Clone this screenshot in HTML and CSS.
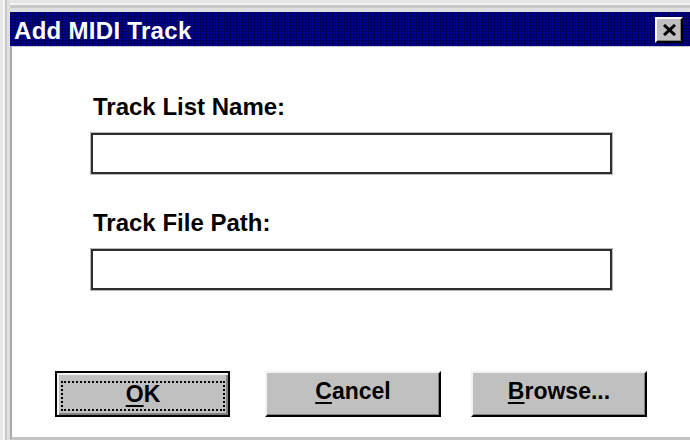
FILE: index.html
```html
<!DOCTYPE html>
<html lang="en">
<head>
<meta charset="utf-8">
<title>Add MIDI Track</title>
<link rel="stylesheet" href="styles.css">
</head>
<body>
<div class="window">
  <div class="titlebar">
    <span class="title">Add MIDI Track</span>
    <button class="close" type="button" aria-label="Close">
      <svg width="15" height="12" viewBox="0 0 15 12" aria-hidden="true">
        <path d="M2 1 L13 11 M13 1 L2 11" stroke="#000" stroke-width="3" fill="none"/>
      </svg>
    </button>
  </div>
  <div class="client">
    <form class="fields">
      <label class="field-label" for="list-name">Track List Name:</label>
      <input class="textbox" id="list-name" type="text">
      <label class="field-label second" for="file-path">Track File Path:</label>
      <input class="textbox" id="file-path" type="text">
    </form>
    <div class="buttons">
      <button class="btn default" type="button"><span class="focus"><u>O</u>K</span></button>
      <button class="btn cancel" type="button"><u>C</u>ancel</button>
      <button class="btn browse" type="button"><u>B</u>rowse...</button>
    </div>
  </div>
</div>
</body>
</html>
```

FILE: styles.css
```css
html, body {
  margin: 0;
  padding: 0;
}

body {
  width: 690px;
  height: 440px;
  overflow: hidden;
  background: #dcdcdc;
  font-family: "Liberation Sans", Arial, sans-serif;
}

/* outer sizing frame */
.window {
  box-sizing: border-box;
  height: 440px;
  padding: 12px 0 0 10px;
  display: flex;
  flex-direction: column;
  background:
    linear-gradient(to right, #e6e6e6 0 3px, #f4f4f4 3px 5px, #c8c8c8 5px 7px, #e0e0e0 7px 10px) left top / 10px 100% no-repeat,
    linear-gradient(to bottom, #e6e6e6 0 3px, #f4f4f4 3px 5px, #c8c8c8 5px 8px, #e0e0e0 8px 12px) left top / 100% 12px no-repeat,
    #e0e0e0;
}

/* caption bar with dithered navy fill */
.titlebar {
  height: 34px;
  display: flex;
  align-items: flex-start;
  justify-content: space-between;
  background:
    radial-gradient(circle, #000040 0.9px, transparent 1.2px) 0 0 / 3px 3px,
    #000096;
}

.title {
  padding: 6px 0 0 4px;
  color: #fff;
  font-weight: bold;
  font-size: 24px;
  line-height: 25px;
  letter-spacing: 0.3px;
}

.close {
  box-sizing: border-box;
  width: 28px;
  height: 26px;
  margin: 5px 7px 0 0;
  padding: 0;
  display: flex;
  align-items: center;
  justify-content: center;
  background: #c0c0c0;
  border-style: solid;
  border-width: 2px;
  border-color: #ffffff #000000 #000000 #ffffff;
  box-shadow: inset -1px -1px #808080;
}

.close svg {
  display: block;
}

/* dialog body */
.client {
  flex: 1;
  display: flex;
  flex-direction: column;
  background: #fff;
  border-left: 2px solid #a8a8a8;
  border-top: 1px solid #c8c8c8;
  border-bottom: 3px solid #c4c4c4;
}

.fields {
  margin: 0;
  padding: 47px 0 0 79px;
  display: flex;
  flex-direction: column;
  align-items: flex-start;
}

.field-label {
  padding-left: 2px;
  color: #000;
  font-weight: bold;
  font-size: 24px;
  line-height: 25px;
}

.field-label.second {
  margin-top: 36px;
}

.textbox {
  box-sizing: border-box;
  width: 521px;
  height: 41px;
  margin: 14px 0 0 0;
  padding: 0 6px;
  border: 2px solid #2e2e2e;
  box-shadow: 0 0 0 1px #b8b8b8;
  background: #fff;
  font: 20px "Liberation Sans", Arial, sans-serif;
  outline: none;
}

/* push buttons */
.buttons {
  display: flex;
  padding: 81px 0 0 43px;
}

.btn {
  box-sizing: border-box;
  width: 176px;
  height: 46px;
  padding: 0 0 5px 0;
  display: flex;
  align-items: center;
  justify-content: center;
  background: #c0c0c0;
  color: #000;
  border-style: solid;
  border-width: 2px;
  border-color: #f2f2f2 #000000 #000000 #f2f2f2;
  box-shadow: inset -1px -1px #808080;
  font-family: "Liberation Sans", Arial, sans-serif;
  font-weight: bold;
  font-size: 23px;
  line-height: 25px;
}

.btn u {
  text-decoration-thickness: 2px;
  text-underline-offset: 3px;
}

.btn.default {
  width: 175px;
  padding: 0;
  display: block;
  border: 2px solid #000;
  box-shadow:
    inset 2px 2px #f2f2f2,
    inset -2px -2px #808080;
}

.btn.default .focus {
  display: flex;
  align-items: center;
  justify-content: center;
  height: 23px;
  padding-bottom: 3px;
  margin: 3px 3px 0 4px;
  border: 2px dotted #000;
}

.btn.cancel {
  margin-left: 35px;
}

.btn.browse {
  margin-left: 30px;
}
```
